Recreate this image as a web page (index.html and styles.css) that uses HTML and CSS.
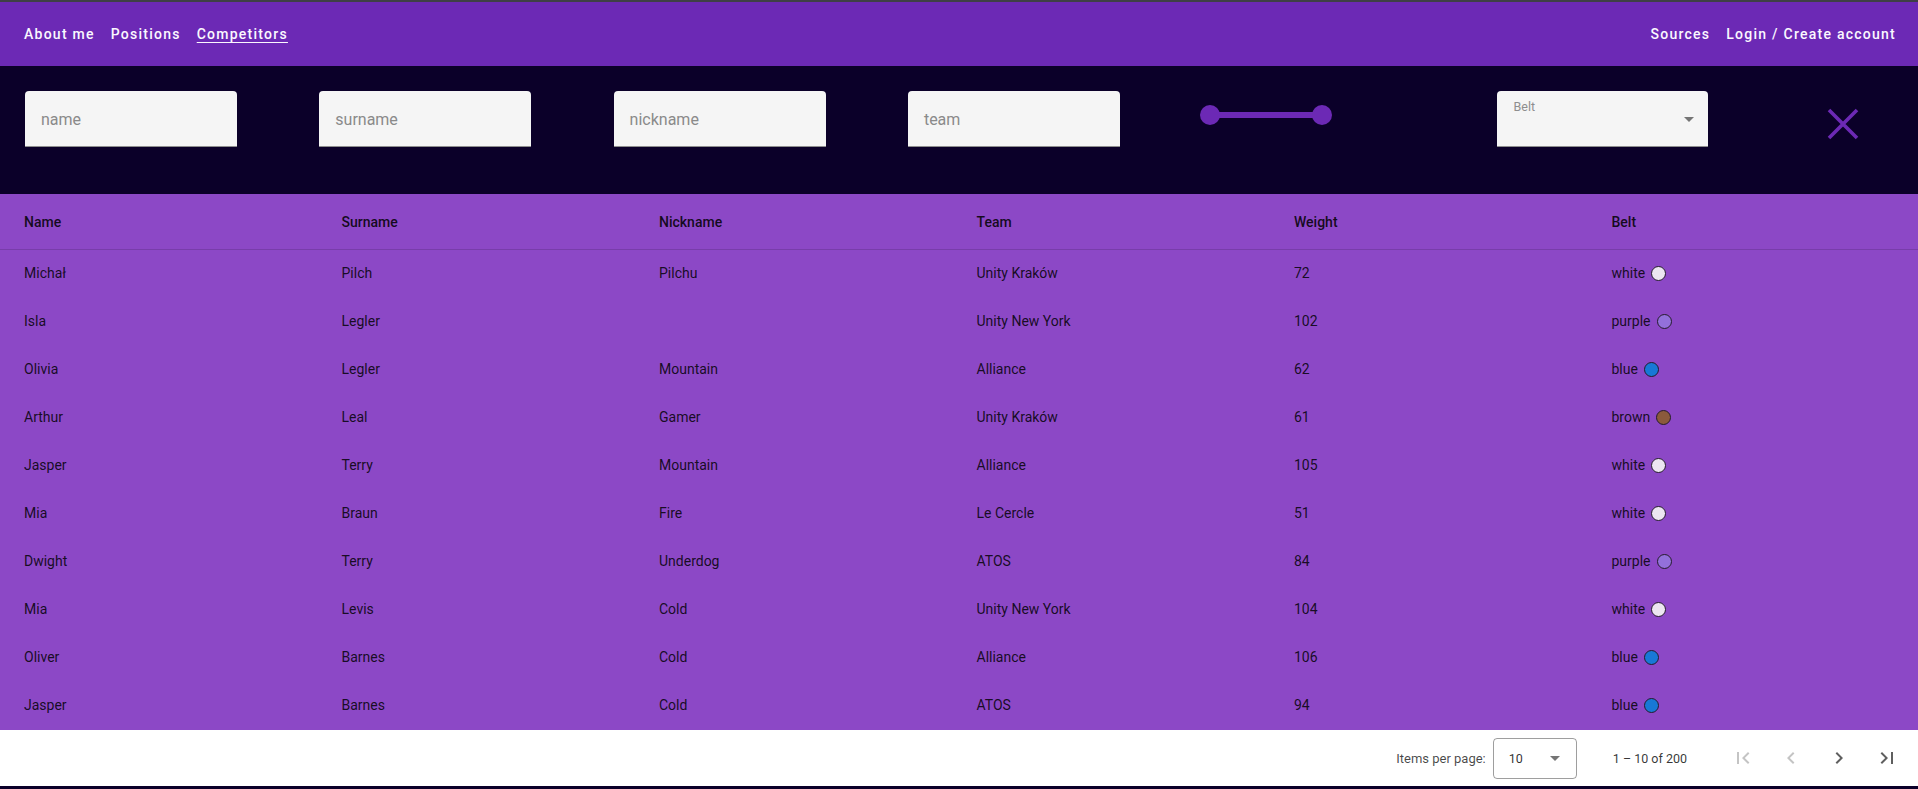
FILE: index.html
```html
<!DOCTYPE html>
<html lang="en">
<head>
<meta charset="utf-8">
<title>Competitors</title>
<link rel="stylesheet" href="styles.css">
</head>
<body>
<header class="topbar">
  <nav class="nav">
    <a class="nav-link">About me</a>
    <a class="nav-link">Positions</a>
    <a class="nav-link active">Competitors</a>
  </nav>
  <nav class="nav">
    <a class="nav-link">Sources</a>
    <a class="nav-link">Login / Create account</a>
  </nav>
</header>

<section class="filters">
  <div class="field"><span class="placeholder">name</span></div>
  <div class="field"><span class="placeholder">surname</span></div>
  <div class="field"><span class="placeholder">nickname</span></div>
  <div class="field"><span class="placeholder">team</span></div>
  <div class="slider"><span class="thumb"></span><span class="track"></span><span class="thumb"></span></div>
  <div class="field select"><span class="float-label">Belt</span><span class="select-arrow"></span></div>
  <button class="clear" aria-label="clear">
    <svg width="32" height="32" viewBox="0 0 32 32"><path d="M2 2L30 30M30 2L2 30" stroke="#6c29b5" stroke-width="3.6" fill="none"/></svg>
  </button>
</section>

<section class="table">
  <div class="row head">
    <div class="cell">Name</div><div class="cell">Surname</div><div class="cell">Nickname</div><div class="cell">Team</div><div class="cell">Weight</div><div class="cell">Belt</div>
  </div>
  <div class="row"><div class="cell">Michał</div><div class="cell">Pilch</div><div class="cell">Pilchu</div><div class="cell">Unity Kraków</div><div class="cell">72</div><div class="cell">white<span class="dot white"></span></div></div>
  <div class="row"><div class="cell">Isla</div><div class="cell">Legler</div><div class="cell"></div><div class="cell">Unity New York</div><div class="cell">102</div><div class="cell">purple<span class="dot purple"></span></div></div>
  <div class="row"><div class="cell">Olivia</div><div class="cell">Legler</div><div class="cell">Mountain</div><div class="cell">Alliance</div><div class="cell">62</div><div class="cell">blue<span class="dot blue"></span></div></div>
  <div class="row"><div class="cell">Arthur</div><div class="cell">Leal</div><div class="cell">Gamer</div><div class="cell">Unity Kraków</div><div class="cell">61</div><div class="cell">brown<span class="dot brown"></span></div></div>
  <div class="row"><div class="cell">Jasper</div><div class="cell">Terry</div><div class="cell">Mountain</div><div class="cell">Alliance</div><div class="cell">105</div><div class="cell">white<span class="dot white"></span></div></div>
  <div class="row"><div class="cell">Mia</div><div class="cell">Braun</div><div class="cell">Fire</div><div class="cell">Le Cercle</div><div class="cell">51</div><div class="cell">white<span class="dot white"></span></div></div>
  <div class="row"><div class="cell">Dwight</div><div class="cell">Terry</div><div class="cell">Underdog</div><div class="cell">ATOS</div><div class="cell">84</div><div class="cell">purple<span class="dot purple"></span></div></div>
  <div class="row"><div class="cell">Mia</div><div class="cell">Levis</div><div class="cell">Cold</div><div class="cell">Unity New York</div><div class="cell">104</div><div class="cell">white<span class="dot white"></span></div></div>
  <div class="row"><div class="cell">Oliver</div><div class="cell">Barnes</div><div class="cell">Cold</div><div class="cell">Alliance</div><div class="cell">106</div><div class="cell">blue<span class="dot blue"></span></div></div>
  <div class="row"><div class="cell">Jasper</div><div class="cell">Barnes</div><div class="cell">Cold</div><div class="cell">ATOS</div><div class="cell">94</div><div class="cell">blue<span class="dot blue"></span></div></div>
</section>

<footer class="paginator">
  <span class="page-size-label">Items per page:</span>
  <div class="page-size"><span>10</span><span class="select-arrow"></span></div>
  <span class="range">1 – 10 of 200</span>
  <button class="pg-btn disabled"><svg width="24" height="24" viewBox="0 0 24 24"><path d="M18.41 16.59L13.82 12l4.59-4.59L17 6l-6 6 6 6zM6 6h2v12H6z"/></svg></button>
  <button class="pg-btn disabled"><svg width="24" height="24" viewBox="0 0 24 24"><path d="M15.41 7.41L14 6l-6 6 6 6 1.41-1.41L10.83 12z"/></svg></button>
  <button class="pg-btn"><svg width="24" height="24" viewBox="0 0 24 24"><path d="M10 6L8.59 7.41 13.17 12l-4.58 4.59L10 18l6-6z"/></svg></button>
  <button class="pg-btn"><svg width="24" height="24" viewBox="0 0 24 24"><path d="M5.59 7.41L10.18 12l-4.59 4.59L7 18l6-6-6-6zM16 6h2v12h-2z"/></svg></button>
</footer>
</body>
</html>
```

FILE: styles.css
```css
* { box-sizing: border-box; }

body {
  margin: 0;
  background: #0b0029;
  font-family: Roboto, "Liberation Sans", sans-serif;
  border-top: 2px solid #3f3f46;
}

.topbar {
  height: 64px;
  background: #6c29b5;
  display: flex;
  align-items: center;
  justify-content: space-between;
  padding: 0 14px 0 16px;
}

.nav { display: flex; }

.nav-link {
  padding: 0 8px;
  color: #fbf8ff;
  font-size: 14px;
  font-weight: 500;
  letter-spacing: 1.25px;
  line-height: 36px;
  cursor: pointer;
}

.nav-link.active { text-decoration: underline; text-underline-offset: 3px; }

.filters {
  height: 128px;
  padding: 25px 0 0 25px;
  display: grid;
  grid-template-columns: repeat(6, 212px) auto;
  column-gap: 82.3px;
  align-items: start;
}

.field {
  height: 56px;
  background: #f5f5f5;
  border-radius: 4px 4px 0 0;
  border-bottom: 1px solid #8e8e8e;
  display: flex;
  align-items: center;
  padding: 2px 16px 0;
  position: relative;
}

.placeholder {
  font-size: 16px;
  color: #8a8a8a;
}

.select { align-items: flex-start; padding-top: 8px; margin-left: 1px; }

.float-label {
  font-size: 12.5px;
  color: #8e8e8e;
}

.select-arrow {
  width: 0;
  height: 0;
  border-left: 5px solid transparent;
  border-right: 5px solid transparent;
  border-top: 5px solid #757575;
}

.select .select-arrow {
  position: absolute;
  right: 14px;
  top: 26px;
}

.slider {
  display: flex;
  align-items: center;
  width: 132px;
  margin: 14px 0 0 -2px;
}

.thumb {
  width: 20px;
  height: 20px;
  border-radius: 50%;
  background: #6c29b5;
  flex: none;
}

.track {
  flex: 1;
  height: 6px;
  background: #6c29b5;
  margin: 0 -2px;
}

.clear {
  background: none;
  border: 0;
  padding: 0;
  margin: 17px 0 0 36px;
  width: 32px;
  height: 32px;
  cursor: pointer;
}

.clear svg { display: block; }

.table { background: #8c48c6; }

.row {
  display: grid;
  grid-template-columns: repeat(5, 317.5px) 1fr;
  padding-left: 24px;
  padding-bottom: 2px;
  height: 48px;
  align-items: center;
  font-size: 14px;
  color: rgba(0, 0, 0, 0.84);
}

.row.head {
  height: 56px;
  padding-bottom: 0;
  border-bottom: 1px solid rgba(0, 0, 0, 0.14);
  font-weight: 500;
  color: rgba(0, 0, 0, 0.86);
}

.cell { display: flex; align-items: center; white-space: pre; }

.dot {
  display: inline-block;
  width: 15px;
  height: 15px;
  border-radius: 50%;
  border: 1px solid #241b2b;
  margin-left: 6px;
}

.dot.white { background: #ece6f1; }
.dot.purple { background: #9370db; }
.dot.blue { background: #1878d6; }
.dot.brown { background: #8b5a3c; }

.paginator {
  height: 56px;
  background: #fff;
  display: flex;
  align-items: center;
  justify-content: flex-end;
  padding-right: 7px;
  font-size: 12.5px;
  color: rgba(0, 0, 0, 0.72);
}

.page-size-label { margin-right: 7px; font-size: 13px; }

.page-size {
  width: 84px;
  height: 41px;
  border: 1px solid rgba(0, 0, 0, 0.38);
  border-radius: 4px;
  display: flex;
  align-items: center;
  justify-content: space-between;
  padding: 0 16px 0 15px;
  color: rgba(0, 0, 0, 0.82);
}

.range { margin: 0 32px 0 36px; color: rgba(0, 0, 0, 0.8); }

.pg-btn {
  width: 48px;
  height: 40px;
  border: 0;
  background: none;
  padding: 0;
  display: flex;
  align-items: center;
  justify-content: center;
  fill: #5f5f5f;
}

.pg-btn.disabled { fill: #c4c4c4; }
```
